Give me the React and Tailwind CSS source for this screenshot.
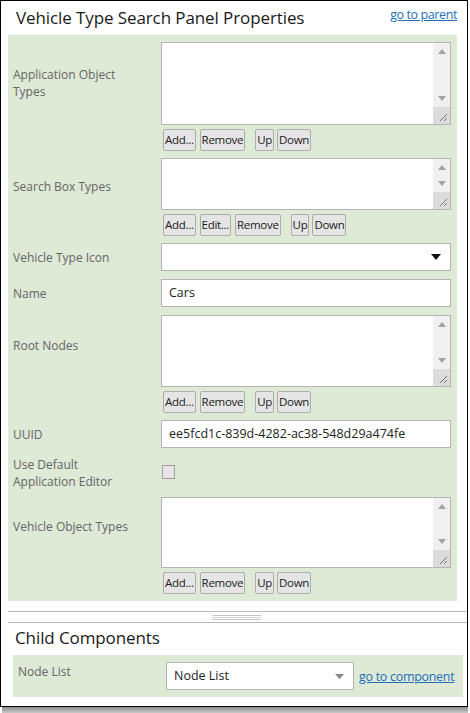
import React from 'react';

const FONT = { fontFamily: '"Open Sans", "Noto Sans", sans-serif' };

const Btn = ({ children, className = '' }) => (
  <button className={`h-[22px] px-[1px] border border-[#adadad] rounded-[2px] bg-[#e5e5e5] text-[11.5px] tracking-[-0.3px] leading-none text-[#1a1a1a] ${className}`}>
    {children}
  </button>
);

const FakeTextarea = ({ h }) => (
  <div className={`flex border border-[#b4b4b4] bg-white ${h}`}>
    <div className="flex-1" />
    <div className="w-[17px] flex flex-col bg-[#f0f0f0]">
      <div className="flex-1 flex flex-col items-center justify-between py-[6px]">
        <svg width="8" height="5" viewBox="0 0 8 5"><path d="M0 5 L4 0 L8 5 Z" fill="#a3a3a3" /></svg>
        <svg width="8" height="5" viewBox="0 0 8 5"><path d="M0 0 L4 5 L8 0 Z" fill="#a3a3a3" /></svg>
      </div>
      <div className="h-[17px] bg-[#dcdcdc] flex items-end justify-end p-[2px]">
        <svg width="10" height="10" viewBox="0 0 10 10">
          <path d="M9 2 L2 9 M9 6 L6 9" stroke="#777" strokeWidth="1" />
        </svg>
      </div>
    </div>
  </div>
);

const Row = ({ label, labelPt = 'pt-0', className = '', children }) => (
  <div className={`flex ${className}`}>
    <div className={`w-[153px] pl-[5px] pr-2 text-[12px] leading-[17px] text-[#666] ${labelPt}`}>{label}</div>
    <div className="w-[290px]">{children}</div>
  </div>
);

const ListField = ({ label, labelPt, h, edit, className }) => (
  <Row label={label} labelPt={labelPt} className={className}>
    <FakeTextarea h={h} />
    <div className="flex mt-[4px] pl-[2px]">
      <Btn>Add...</Btn>
      {edit && <Btn className="ml-[4px]">Edit...</Btn>}
      <Btn className="ml-[4px]">Remove</Btn>
      <Btn className="ml-[10px]">Up</Btn>
      <Btn className="ml-[3px]">Down</Btn>
    </div>
  </Row>
);

const TextInput = ({ value }) => (
  <div className="h-[28px] border border-[#b4b4b4] bg-white flex items-center pl-[7px] text-[12.5px] text-[#222]">
    {value}
  </div>
);

export default function App() {
  return (
    <div className="w-[470px] h-[713px] bg-white" style={FONT}>
      <div className="w-[468px] h-[707px] border border-black bg-white flex flex-col">
        {/* Header */}
        <div className="h-[34px] flex items-center justify-between pl-[15px] pr-[10px]">
          <h1 className="text-[17px] tracking-[-0.1px] text-[#1a1a1a] pb-[1px]">Vehicle Type Search Panel Properties</h1>
          <a className="text-[12.5px] tracking-[-0.4px] text-[#1e6fb8] underline pb-[5px]">go to parent</a>
        </div>

        {/* Properties */}
        <div className="ml-[7px] w-[449px] bg-[#dee9d6] pt-[7px] pb-[7px]">
          <ListField label={<>Application Object<br />Types</>} labelPt="pt-[24px]" h="h-[83px]" />
          <ListField label="Search Box Types" labelPt="pt-[20px]" h="h-[52px]" edit className="mt-[7px]" />
          <Row label="Vehicle Type Icon" labelPt="pt-[6px]" className="mt-[7px]">
            <div className="h-[28px] border border-[#b4b4b4] bg-white flex items-center justify-end pr-[9px]">
              <svg width="10" height="6" viewBox="0 0 10 6"><path d="M0 0 L10 0 L5 6 Z" fill="#111" /></svg>
            </div>
          </Row>
          <Row label="Name" labelPt="pt-[6px]" className="mt-[8px]">
            <TextInput value="Cars" />
          </Row>
          <ListField label="Root Nodes" labelPt="pt-[22px]" h="h-[72px]" className="mt-[8px]" />
          <Row label="UUID" labelPt="pt-[6px]" className="mt-[7px]">
            <TextInput value="ee5fcd1c-839d-4282-ac38-548d29a474fe" />
          </Row>
          <Row label={<>Use Default<br />Application Editor</>} className="mt-[8px] h-[41px]">
            <div className="mt-[9px] ml-[1px] w-[13px] h-[14px] border border-[#a0a0a0] bg-[#e6e6e6]" />
          </Row>
          <ListField label="Vehicle Object Types" labelPt="pt-[21px]" h="h-[71px]" />
        </div>

        {/* Splitter */}
        <div className="mt-[10px] ml-[7px] h-[12px] border-t border-b border-[#b9b9b9] flex items-center justify-center pr-[2px]">
          <div className="w-[49px] flex flex-col gap-[1px]">
            <div className="h-[1px] bg-[#c4c4c4]" />
            <div className="h-[1px] bg-[#d4d4d4]" />
            <div className="h-[1px] bg-[#c4c4c4]" />
          </div>
        </div>

        {/* Child components */}
        <div className="h-[32px] flex items-center pl-[14px] pb-[3px]">
          <h2 className="text-[17px] tracking-[-0.1px] text-[#1a1a1a]">Child Components</h2>
        </div>
        <div className="ml-[12px] w-[450px] h-[42px] bg-[#dee9d6] flex items-start">
          <div className="w-[153px] pl-[5px] pt-[8px] text-[12px] leading-[17px] text-[#666]">Node List</div>
          <div className="mt-[7px] w-[188px] h-[28px] border border-[#b4b4b4] bg-white flex items-center justify-between pl-[7px] pr-[9px] text-[12.5px] text-[#222]">
            <span>Node List</span>
            <svg width="9" height="5" viewBox="0 0 9 5"><path d="M0 0 L9 0 L4.5 5 Z" fill="#888" /></svg>
          </div>
          <a className="ml-[5px] mt-[13px] text-[12.5px] tracking-[-0.3px] text-[#1e6fb8] underline leading-[17px]">go to component</a>
        </div>
      </div>
      <div className="ml-[2px] w-[466px] h-[6px] bg-gradient-to-b from-[#8c8c8c] to-[#c8c8c8]" />
    </div>
  );
}
